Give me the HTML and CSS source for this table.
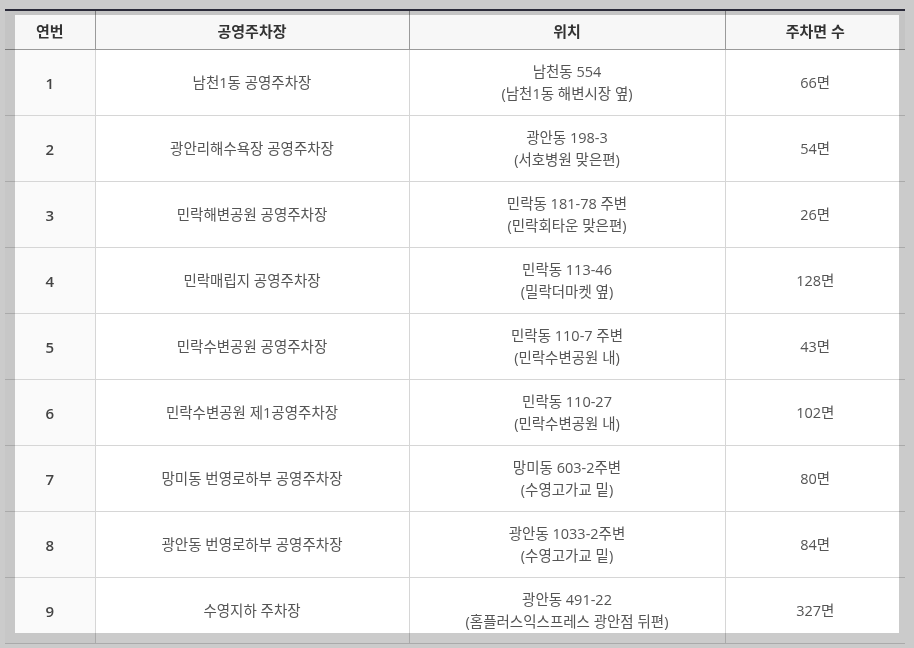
FILE: index.html
```html
<!DOCTYPE html>
<html lang="ko">
<head>
<meta charset="utf-8">
<title>공영주차장</title>
<link rel="stylesheet" href="styles.css">
</head>
<body>
<div class="frame">
  <table class="parking">
    <colgroup>
      <col class="c-no">
      <col class="c-name">
      <col class="c-loc">
      <col class="c-cnt">
    </colgroup>
    <thead>
      <tr><th>연번</th><th>공영주차장</th><th>위치</th><th>주차면 수</th></tr>
    </thead>
    <tbody>
      <tr><td class="no">1</td><td>남천1동 공영주차장</td><td>남천동 554<br>(남천1동 해변시장 옆)</td><td>66면</td></tr>
      <tr><td class="no">2</td><td>광안리해수욕장 공영주차장</td><td>광안동 198-3<br>(서호병원 맞은편)</td><td>54면</td></tr>
      <tr><td class="no">3</td><td>민락해변공원 공영주차장</td><td>민락동 181-78 주변<br>(민락회타운 맞은편)</td><td>26면</td></tr>
      <tr><td class="no">4</td><td>민락매립지 공영주차장</td><td>민락동 113-46<br>(밀락더마켓 옆)</td><td>128면</td></tr>
      <tr><td class="no">5</td><td>민락수변공원 공영주차장</td><td>민락동 110-7 주변<br>(민락수변공원 내)</td><td>43면</td></tr>
      <tr><td class="no">6</td><td>민락수변공원 제1공영주차장</td><td>민락동 110-27<br>(민락수변공원 내)</td><td>102면</td></tr>
      <tr><td class="no">7</td><td>망미동 번영로하부 공영주차장</td><td>망미동 603-2주변<br>(수영고가교 밑)</td><td>80면</td></tr>
      <tr><td class="no">8</td><td>광안동 번영로하부 공영주차장</td><td>광안동 1033-2주변<br>(수영고가교 밑)</td><td>84면</td></tr>
      <tr><td class="no">9</td><td>수영지하 주차장</td><td>광안동 491-22<br>(홈플러스익스프레스 광안점 뒤편)</td><td>327면</td></tr>
    </tbody>
  </table>
</div>
</body>
</html>
```
FILE: styles.css
```css
html, body {
  margin: 0;
  padding: 0;
  background: #cbcbcb;
  height: 100%;
  overflow: hidden;
}
body {
  padding: 9px 0 0 5px;
  font-family: "Open Sans", "Noto Sans CJK KR", sans-serif;
  font-size: 14.5px;
  color: #555;
}
.frame {
  position: relative;
  width: 900px;
}
.frame::after {
  content: "";
  position: absolute;
  top: 2px;
  left: 0;
  right: 0;
  bottom: 0;
  border-style: solid;
  border-color: #cbcbcb;
  border-width: 4px 6px 11px 10px;
  mix-blend-mode: multiply;
  pointer-events: none;
}
.parking {
  width: 900px;
  table-layout: fixed;
  border-collapse: collapse;
  border-top: 2px solid #2a2a38;
  background: #fff;
}
.c-no { width: 90px; }
.c-name { width: 314px; }
.c-loc { width: 316px; }
.c-cnt { width: 180px; }
.parking th {
  height: 38px;
  padding: 0;
  background: #f7f7f7;
  color: #333;
  font-weight: 700;
  font-size: 15px;
  border-bottom: 1px solid #9a9a9a;
  border-left: 1px solid #9a9a9a;
  text-align: center;
  vertical-align: middle;
}
.parking td {
  height: 65px;
  padding: 0;
  text-align: center;
  vertical-align: middle;
  line-height: 22px;
  border-bottom: 1px solid #d6d6d6;
  border-left: 1px solid #d6d6d6;
}
.parking th:first-child,
.parking td:first-child {
  border-left: none;
}
.parking td.no {
  background: #fafafa;
  color: #444;
  font-weight: 600;
  font-size: 15px;
}
```
